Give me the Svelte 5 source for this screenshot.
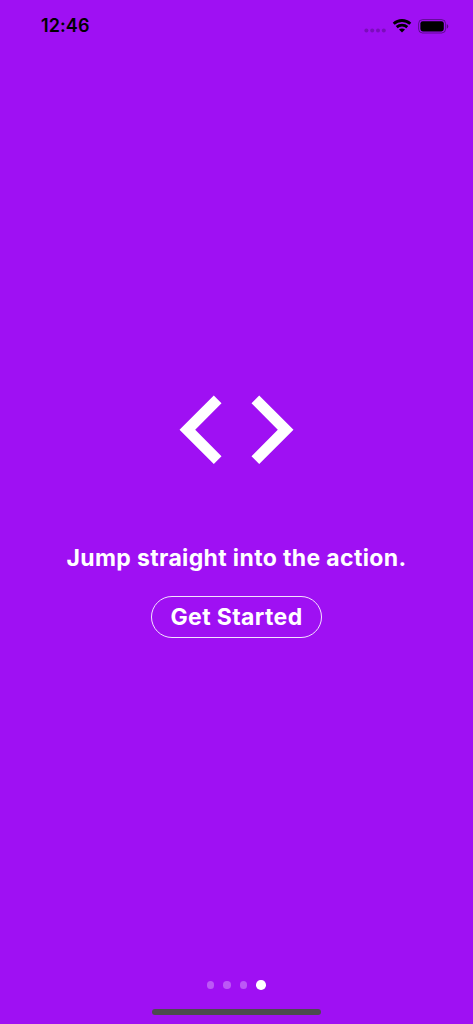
<main class="screen">
  <header class="status">
    <time>12:46</time>
    <div class="indicators">
      <svg class="signal" width="22" height="6" viewBox="0 0 22 6" aria-hidden="true">
        {#each [2.4, 8.2, 14, 19.8] as x}<circle cx={x} cy="3.4" r="2" />{/each}
      </svg>
      <svg class="wifi" width="20" height="14" viewBox="0 0 20 14" aria-hidden="true">
        <path d="M1.7 4.8C6.4.4 13.6.4 18.3 4.8" />
        <path d="M4.7 8.1C7.7 5.4 12.3 5.4 15.3 8.1" />
        <path class="solid" d="M7 10.6C8.7 9.1 11.3 9.1 13 10.6L10 13.6Z" />
      </svg>
      <svg class="battery" width="31" height="15" viewBox="0 0 31 15" aria-hidden="true">
        <rect class="case" x=".6" y=".6" width="27" height="13.4" rx="4" />
        <rect x="2.4" y="2.2" width="23.4" height="10.2" rx="2.4" />
        <path class="cap" d="M28.8 5v4.8c2-1 2-3.8 0-4.8Z" />
      </svg>
    </div>
  </header>
  <section class="intro">
    <svg class="code" width="115" height="70" viewBox="0 0 115 70" aria-hidden="true">
      <path d="M34.8 .4 42.5 8.2 16.2 34.7 42.5 61.2 34.8 69 .5 34.7ZM80.2 .4 72.5 8.2 98.8 34.7 72.5 61.2 80.2 69 114.5 34.7Z" />
    </svg>
    <h1>Jump straight into the action.</h1>
    <button>Get Started</button>
  </section>
  <footer>
    <div class="pages"><i></i><i></i><i></i><i class="active"></i></div>
    <div class="home"></div>
  </footer>
</main>

<style>
  :global(body) { background: #9f10f3; }
  .screen { box-sizing: border-box; height: 1024px; background: #9f10f3; font-family: Inter, sans-serif; color: #fff; display: flex; flex-direction: column; align-items: center; overflow: hidden; }
  .status { box-sizing: border-box; width: 100%; height: 52px; padding: 0 24px 0 41px; display: flex; justify-content: space-between; align-items: center; color: #000; }
  time { font-size: 18px; font-weight: 600; letter-spacing: .1px; padding-bottom: 1px; }
  .indicators { display: flex; align-items: center; }
  .signal { opacity: .22; margin: 8px 6px 0 0; }
  .wifi { margin-right: 6px; }
  .wifi path { fill: none; stroke: #000; stroke-width: 2.8; }
  .wifi .solid { fill: #000; stroke: none; }
  .battery .case { fill: none; stroke: #000; opacity: .4; }
  .battery .cap { opacity: .45; }
  .intro { display: flex; flex-direction: column; align-items: center; padding-top: 343px; }
  .code { display: block; fill: #fff; }
  h1 { font-size: 23px; line-height: 30px; font-weight: 650; letter-spacing: .36px; margin: 78px 0 23px; white-space: nowrap; }
  button { box-sizing: border-box; width: 171px; height: 42px; padding: 0; border: 1px solid #f5e4fe; border-radius: 21px; background: transparent; color: #fff; font: 650 23px/40px Inter, sans-serif; letter-spacing: .38px; white-space: nowrap; }
  footer { margin-top: auto; width: 100%; display: flex; flex-direction: column; align-items: center; padding-bottom: 9px; }
  .pages { display: flex; align-items: center; gap: 9px; margin-bottom: 19px; }
  .pages i { width: 7.5px; height: 7.5px; border-radius: 50%; background: rgba(255,255,255,.3); }
  .pages .active { width: 9.6px; height: 9.6px; background: #fff; }
  .home { width: 169px; height: 6px; border-radius: 3px; background: #4c4a4e; }
</style>
